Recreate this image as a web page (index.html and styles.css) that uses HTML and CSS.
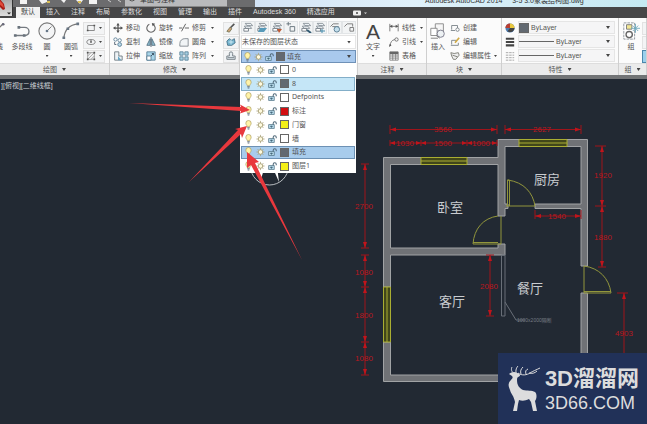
FILE: index.html
```html
<!DOCTYPE html>
<html lang="zh-CN">
<head>
<meta charset="utf-8">
<title>Autodesk AutoCAD 2014</title>
<link rel="stylesheet" href="styles.css">
</head>
<body>
<svg class="defs" aria-hidden="true">
  <symbol id="bulb" viewBox="0 0 10 12"><path d="M3.5 8C3.5 6.500 1.800 6 1.800 3.800a3.200 3.200 0 0 1 6.400 0C8.200 6 6.500 6.500 6.500 8z" fill="#fff3a8" stroke="#a99a5c" stroke-width=".8"/><path d="M3.500 9.300h3M4 10.800h2" stroke="#667381" stroke-width="1.200"/></symbol>
  <symbol id="sun" viewBox="0 0 12 12"><path d="M6 .5v11M.5 6h11M2.100 2.100l7.800 7.800M9.900 2.100l-7.800 7.800" stroke="#aaa27a" stroke-width="1"/><circle cx="6" cy="6" r="3" fill="#fffbe0" stroke="#9c9367"/></symbol>
  <symbol id="lock" viewBox="0 0 13 12"><path d="M7.500 6V3.500a2.200 2.200 0 0 1 4.400 0V5" fill="none" stroke="#4f6878" stroke-width="1.500"/><rect x="1" y="5.500" width="8" height="5.500" fill="#b4d6e6" stroke="#4f7184"/><path d="M3 8h4M5 7v3" stroke="#36586c"/></symbol>
  <symbol id="layer" viewBox="0 0 12 12"><path d="M3 1.500h6L11 4H5zM2 4.500h6l2 2.500H4z" fill="#eef3f6" stroke="#717b83" stroke-width=".8"/><path d="M1.500 7v3h5V7z" fill="#fff" stroke="#66717a" stroke-width=".9"/></symbol>
</svg>

<header class="titlebar">
  <div class="quick">
    <svg viewBox="0 0 110 7" class="quick-icons"><path d="M6 0h7v4H6zM25 0l3 4 5-2V0M47 0l3 3 2-3M62 0l4 4 3-4M75 0h8v4h-8z" fill="#f3f3f3"/><path d="M33 2h3M64 2h3" stroke="#d8bd55" stroke-width="2"/><path d="M94 0l3 2M104 0l3 2" stroke="#ccc"/></svg>
  </div>
  <div class="workspace-name"><svg viewBox="0 0 8 8"><circle cx="4" cy="3" r="3" fill="#ccc" stroke="#555"/><circle cx="4" cy="3" r="1" fill="#555"/></svg>草图与注释</div>
  <div class="quick-end"></div>
  <div class="caption">Autodesk AutoCAD 2014 &nbsp; &nbsp; 3-5 3.0家装结构图.dwg</div>
</header>

<nav class="tabs">
  <a class="tab active" href="#">默认</a><a class="tab" href="#">插入</a><a class="tab" href="#">注释</a><a class="tab" href="#">布局</a><a class="tab" href="#">参数化</a><a class="tab" href="#">视图</a><a class="tab" href="#">管理</a><a class="tab" href="#">输出</a><a class="tab" href="#">插件</a><a class="tab" href="#">Autodesk 360</a><a class="tab" href="#">精选应用</a>
  <button class="tab-toggle" aria-label="最小化功能区"><svg viewBox="0 0 14 6"><rect width="8" height="5" y=".5" rx="1" fill="#eee"/><circle cx="4" cy="3" r="1" fill="#444"/><path d="M11 2.500h3L12.500 4z" fill="#ddd"/></svg></button>
  <button class="app-button" aria-label="应用程序菜单"><svg viewBox="0 0 12 16"><path d="M-1-2L4 4 5 9 3 10-1 6z" fill="#a91b14"/><path d="M-1 0l4 4 1 4-5-4z" fill="#e04a3a"/><path d="M7 12.500h4L9 14.500z" fill="#222"/></svg></button>
</nav>

<main class="ribbon">
  <section class="panel">
    <div class="tools draw">
      <button class="big"><svg viewBox="0 0 20 20"><path d="M2 17L18 2" stroke="#777" stroke-width="1.400"/><circle cx="18" cy="2.500" r="1.500" fill="#667"/></svg>直线</button>
      <button class="big"><svg viewBox="0 0 20 20"><path d="M2 15h10c8 0 7-9 1-9H6" fill="none" stroke="#747a80" stroke-width="1.500"/><path d="M1 13.500h3v3H1zM5 4.500h3v3H5zM11 13.500h3v3h-3z" fill="#69737c"/></svg>多段线</button>
      <button class="big"><svg viewBox="0 0 20 20"><circle cx="10" cy="10" r="9" fill="#f4f5f6" stroke="#777" stroke-width="1.200"/><path d="M10 10l5-5" stroke="#777"/><circle cx="10" cy="10" r="1.500" fill="#678"/></svg>圆<i class="arrow"></i></button>
      <button class="big"><svg viewBox="0 0 20 20"><path d="M2 18C3 8 8 3 18 2" fill="none" stroke="#777" stroke-width="1.300"/><path d="M.5 16h3v3h-3zM5 6h3v3H5zM16 .5h3v3h-3z" fill="#687684"/></svg>圆弧<i class="arrow"></i></button>
      <div class="stack boxed">
        <button aria-label="矩形"><svg viewBox="0 0 12 12"><path d="M2 3h8v6H2z" fill="none" stroke="#777"/><path d="M1 8h2v2H1zM9 2h2v2H9z" fill="#555"/></svg><i class="arrow"></i></button>
        <button aria-label="椭圆"><svg viewBox="0 0 12 12"><ellipse cx="6" cy="6" rx="5" ry="3" fill="none" stroke="#777"/><path d="M6 4v2M5 6h2" stroke="#555" stroke-width="1.500"/></svg><i class="arrow"></i></button>
        <button aria-label="图案填充"><svg viewBox="0 0 12 12"><path d="M2 2h8v8H2zM2 6l4-4M2 10l8-8M6 10l4-4" fill="none" stroke="#999"/><path d="M1 1h2v2H1zM9 9h2v2H9zM1 9h2v2H1zM9 1h2v2H9z" fill="#555"/></svg><i class="arrow"></i></button>
      </div>
    </div>
    <footer>绘图<i class="arrow"></i></footer>
  </section>

  <section class="panel">
    <div class="tools modify">
      <div class="stack">
        <button><svg viewBox="0 0 12 12"><path d="M6 1v10M1 6h10" stroke="#555" stroke-width="1.500"/><path d="M6 0l2 3H4zM6 12l2-3H4zM0 6l3-2v4zM12 6L9 4v4z" fill="#555"/></svg>移动</button>
        <button><svg viewBox="0 0 12 12"><circle cx="3" cy="3" r="2" fill="#fff" stroke="#557990"/><circle cx="8" cy="4" r="2" fill="#fff" stroke="#557990"/><circle cx="8" cy="9" r="2.300" fill="#b9d9e9" stroke="#557990"/><path d="M2 6v3h2" fill="none" stroke="#456"/></svg>复制</button>
        <button><svg viewBox="0 0 12 12"><path d="M2 11V1h5v5h4v5z" fill="#eef3f6" stroke="#65717a"/><path d="M6 6v5h4z" fill="#66a6c5"/></svg>拉伸</button>
      </div>
      <div class="stack">
        <button><svg viewBox="0 0 12 12"><path d="M4 1.500a5 5 0 1 0 4 0" fill="none" stroke="#666" stroke-width="1.300"/><path d="M7 0l4 1-3 3z" fill="#555"/></svg>旋转</button>
        <button><svg viewBox="0 0 12 12"><path d="M5 2v8H1zM7 2v8h4z" fill="#8fbdd2" stroke="#506d7d"/><path d="M6 0v12" stroke="#456"/></svg>镜像</button>
        <button><svg viewBox="0 0 12 12"><path d="M1 1h10v10H1z" fill="#a8d5e9" stroke="#527a90"/><path d="M1 6h5v5H1z" fill="#fff" stroke="#527a90"/><path d="M6 6l3-3M7 3h2v2" fill="none" stroke="#345"/></svg>缩放</button>
      </div>
      <div class="stack wide">
        <button><svg viewBox="0 0 12 12"><path d="M0 6h4M7 6h5M3 10l5-9" stroke="#666" stroke-width="1.200"/></svg>修剪<i class="arrow"></i></button>
        <button><svg viewBox="0 0 12 12"><path d="M1 11V8c0-4 3-6 6-6h4v9z" fill="#f1f4f6" stroke="#788188"/></svg>圆角<i class="arrow"></i></button>
        <button><svg viewBox="0 0 12 12"><path d="M1 1h4v4H1zM7 1h4v4H7zM1 7h4v4H1zM7 7h4v4H7z" fill="#a7d0e4" stroke="#557f96"/></svg>阵列<i class="arrow"></i></button>
      </div>
      <div class="stack boxed">
        <button aria-label="删除"><svg viewBox="0 0 12 12"><path d="M10 1L5 6" stroke="#555" stroke-width="2"/><path d="M5 5l2 2-3 4-3-1z" fill="#cda177" stroke="#775"/></svg></button>
        <button aria-label="分解"><svg viewBox="0 0 12 12"><path d="M1 5l3-3 3 2 3-2 1 5-4 3H2z" fill="#71b3ce" stroke="#416c83"/><path d="M3 6h6M6 3v6" stroke="#d9eff7"/></svg></button>
        <button aria-label="偏移"><svg viewBox="0 0 12 12"><path d="M4 6V3a2 2 0 0 1 4 0v3h3v4H1V6zM2 8h8" fill="#e6edf1" stroke="#67727a"/></svg></button>
      </div>
    </div>
    <footer>修改<i class="arrow"></i></footer>
  </section>

  <section class="panel layers">
    <div class="layer-tools">
      <button aria-label="图层特性"><svg><use href="#layer"/></svg></button>
      <button aria-label="置为当前"><svg><use href="#layer"/><path d="M4 6h7L8 10H2z" fill="#579ab9"/></svg></button>
      <button aria-label="匹配图层"><svg><use href="#layer"/><path d="M6 7h5l-3 4z" fill="#bd5a35"/></svg></button>
      <button aria-label="上一个"><svg viewBox="0 0 12 12"><path d="M1 2h5M3 0v4M5 5h5v5H5z" fill="none" stroke="#66737b"/></svg></button>
      <button aria-label="隔离"><svg><use href="#layer"/><path d="M7 8l4 3" stroke="#335b73" stroke-width="2"/></svg></button>
      <button aria-label="冻结"><svg><use href="#layer"/><path d="M8 7v4M6 9h5" stroke="#468bab"/></svg></button>
      <button aria-label="关闭"><svg viewBox="0 0 12 12"><path d="M1 5l3-3h6M3 5h7" fill="none" stroke="#777"/><circle cx="8" cy="8" r="3" fill="#c5e0ed" stroke="#567b90"/></svg></button>
      <button aria-label="锁定"><svg viewBox="0 0 12 12"><path d="M1 5l3-3h6v3M7 6v4h4V6z" fill="none" stroke="#777"/></svg></button>
    </div>
    <label class="field state"><select aria-label="图层状态"><option>未保存的图层状态</option></select><i class="arrow"></i></label>
    <div class="combo">
      <button class="layer-row current" aria-haspopup="listbox" aria-expanded="true"><svg><use href="#bulb"/></svg><svg><use href="#sun"/></svg><svg><use href="#lock"/></svg><b class="swatch gray"></b>填充<i class="arrow"></i></button>
      <ul class="layer-list" role="listbox" aria-label="图层">
        <li class="layer-row" role="option"><svg><use href="#bulb"/></svg><svg><use href="#sun"/></svg><svg><use href="#lock"/></svg><b class="swatch"></b>0</li>
        <li class="layer-row hover" role="option"><svg><use href="#bulb"/></svg><svg><use href="#sun"/></svg><svg><use href="#lock"/></svg><b class="swatch gray"></b>8</li>
        <li class="layer-row" role="option"><svg><use href="#bulb"/></svg><svg><use href="#sun"/></svg><svg><use href="#lock"/></svg><b class="swatch"></b>Defpoints</li>
        <li class="layer-row" role="option"><svg><use href="#bulb"/></svg><svg><use href="#sun"/></svg><svg><use href="#lock"/></svg><b class="swatch red"></b>标注</li>
        <li class="layer-row" role="option"><svg><use href="#bulb"/></svg><svg><use href="#sun"/></svg><svg><use href="#lock"/></svg><b class="swatch yellow"></b>门窗</li>
        <li class="layer-row" role="option"><svg><use href="#bulb"/></svg><svg><use href="#sun"/></svg><svg><use href="#lock"/></svg><b class="swatch"></b>墙</li>
        <li class="layer-row selected" role="option" aria-selected="true"><svg><use href="#bulb"/></svg><svg><use href="#sun"/></svg><svg><use href="#lock"/></svg><b class="swatch gray"></b>填充</li>
        <li class="layer-row" role="option"><svg><use href="#bulb"/></svg><svg><use href="#sun"/></svg><svg><use href="#lock"/></svg><b class="swatch yellow"></b>图层1</li>
      </ul>
    </div>
  </section>

  <section class="panel">
    <div class="tools annotate">
      <button class="big"><span class="letter">A</span>文字<i class="arrow"></i></button>
      <div class="stack wide">
        <button><svg viewBox="0 0 12 12"><path d="M1 1v9M11 1v9M1 4h10" stroke="#666" fill="none"/><path d="M1 4l3-2v4zM11 4L8 2v4z" fill="#555"/></svg>线性<i class="arrow"></i></button>
        <button><svg viewBox="0 0 12 12"><path d="M1 11c1-5 2-7 6-8" fill="none" stroke="#666"/><circle cx="9" cy="3" r="2" fill="none" stroke="#666"/><path d="M0 12l1-4 2 2z" fill="#555"/></svg>引线<i class="arrow"></i></button>
        <button><svg viewBox="0 0 12 12"><path d="M1 1h10v10H1zM1 6h10M1 8.500h10M4.500 3v8M8 3v8" fill="#fff" stroke="#777"/><path d="M1 1h10v3H1z" fill="#666"/></svg>表格</button>
      </div>
    </div>
    <footer>注释<i class="arrow"></i></footer>
  </section>

  <section class="panel">
    <div class="tools block">
      <button class="big"><svg viewBox="0 0 20 20"><path d="M7 2h9v8H7z" fill="#f6f6f6" stroke="#888"/><path d="M2 7h7v8H2z" fill="#fff" stroke="#888"/><circle cx="13" cy="13" r="4" fill="#eef2f4" stroke="#778"/><path d="M2 18h8M8 15l4 3" stroke="#777"/></svg>插入</button>
      <div class="stack wide">
        <button><svg viewBox="0 0 12 12"><path d="M2 8V3h7v3M1 9h5" fill="none" stroke="#707a80"/><circle cx="9" cy="8" r="2" fill="#fff" stroke="#707a80"/></svg>创建</button>
        <button><svg viewBox="0 0 12 12"><path d="M2 9V4h6M1 10h9V7" fill="none" stroke="#707a80"/><path d="M6 7l5-6" stroke="#d0aa43" stroke-width="2"/></svg>编辑</button>
        <button><svg viewBox="0 0 12 12"><path d="M1 2l4 1 5-1 1 3-4 5H4L2 6zM3 5l6 2" fill="#eee" stroke="#72746a"/></svg>编辑属性<i class="arrow"></i></button>
      </div>
    </div>
    <footer>块<i class="arrow"></i></footer>
  </section>

  <section class="panel">
    <div class="properties">
      <svg viewBox="0 0 12 12"><circle cx="6" cy="6" r="5.500" fill="#4d7bb0"/><path d="M6 6V.5A5.500 5.500 0 0 1 11.500 6z" fill="#eac83d"/><path d="M6 6H.5A5.500 5.500 0 0 1 6 .5z" fill="#ba3e31"/><path d="M6 6h5.500A5.500 5.500 0 0 1 3 10z" fill="#444"/></svg>
      <label class="field"><b class="swatch gray large"></b><select aria-label="颜色"><option>ByLayer</option></select><i class="arrow"></i></label>
      <svg viewBox="0 0 12 12"><path d="M1 2h10M1 6h10M1 10h10" stroke="#444" stroke-width="2.500"/></svg>
      <label class="field"><span class="sample"></span><select aria-label="线宽"><option>ByLayer</option></select><i class="arrow"></i></label>
      <svg viewBox="0 0 12 12"><path d="M1 2h10M1 5h10M1 8h10M1 11h10" stroke="#999" stroke-dasharray="3 1"/></svg>
      <label class="field"><span class="sample"></span><select aria-label="线型"><option>ByLayer</option></select><i class="arrow"></i></label>
    </div>
    <footer>特性<i class="arrow"></i></footer>
  </section>

  <section class="panel">
    <div class="tools group">
      <button class="big"><svg viewBox="0 0 20 20"><path d="M2 1h12v18H2z" fill="#fff" stroke="#8a9298" stroke-dasharray="3 1"/><path d="M5 3h6v5H5z" fill="#f2e794" stroke="#777"/><circle cx="8" cy="14" r="3.500" fill="#fff" stroke="#666" stroke-width="1.500"/><path d="M15 2v10M10 7h10M12 4l6 6M18 4l-6 6" stroke="#70aabe"/></svg>组</button>
      <div class="stack boxed">
        <button aria-label="解除编组"><svg viewBox="0 0 12 12"><path d="M2 2h8v8H2z" fill="#cbc992" stroke="#555"/></svg></button>
        <button aria-label="组编辑"><svg viewBox="0 0 12 12"><path d="M2 3h7v7H2z" fill="#d9e4ed" stroke="#687c91"/></svg></button>
        <button class="on" aria-label="启用组选择"><svg viewBox="0 0 12 12"><path d="M2 2h8v8H2z" fill="#e8f6ff" stroke="#426c88"/></svg></button>
      </div>
    </div>
    <footer>组<i class="arrow"></i></footer>
  </section>
</main>

<section class="canvas">
  <div class="view-label">][俯视][二维线框]</div>
  <svg class="plan" viewBox="0 79 647 345" role="img" aria-label="户型平面图">
    <g class="compass"><circle cx="269.500" cy="166" r="19"/><path d="M257 166l4 13 4-13zM272 166l7 16-2-16z"/></g>
    <g class="wall">
      <path d="M383.500 157.500H498V139.500H587.500V266H581V208.500H535V204H581V146.500H505V204H508V208.500H505V216H498V164.500H390.500V248H498V244H505V255H390.500V287H383.500z"/>
      <path d="M383.500 342H390.500V375H581V293H587.500V381.500H383.500z"/>
      <path class="screen" d="M501.500 255h3.500v61h-3.500zM505 302l11 18h9"/>
    </g>
    <g class="window">
      <path d="M421 157.500h46v7h-46zM421 161h46M519 139.500h48v7h-48zM519 143h48M383.500 287h7v55h-7zM387 287v55"/>
    </g>
    <g class="door">
      <path d="M506 206h29C533 193 524 182 507.500 180M507.500 180h2v26M507.500 180v26"/>
      <path d="M498 216C483 218 474 229 473 244H501V216M473 242.500h25"/>
      <path d="M584 266C599 268 609 278 611 293H584V266M584 291.500h27"/>
    </g>
    <g class="dim">
      <path d="M390 129.500H497M390 125v9M497 125v9M390 143H497M390 140v6M421 140v6M467 140v6M497 140v6M505 129.500H581M505 125v9M581 125v9M535 216H581M535 210v9M581 210v9"/>
      <path d="M365 164V248M361 164h8M361 248h8M365 255V375M361 255h8M361 287h8M361 342h8M361 375h8M490 255V316M486 255h8M486 316h8M602 146V267M595 146h11M595 206h11M598 267h8M624 293V353M617 293h11"/>
      <path class="heads" d="M390 129.500l6-2v4zM497 129.500l-6-2v4zM390 143l5-2v4zM421 143l-5-2v4zM421 143l5-2v4zM467 143l-5-2v4zM467 143l5-2v4zM497 143l-5-2v4zM505 129.500l6-2v4zM581 129.500l-6-2v4zM535 216l6-2v4zM581 216l-6-2v4zM365 164l-2 6h4zM365 248l-2-6h4zM365 255l-2 6h4zM365 287l-2-6h4zM365 287l-2 6h4zM365 342l-2-6h4zM365 342l-2 6h4zM365 375l-2-6h4zM490 255l-2 6h4zM490 316l-2-6h4zM602 146l-2 6h4zM602 206l-2-6h4zM602 206l-2 6h4zM602 267l-2-6h4zM624 293l-2 6h4z"/>
      <text x="443" y="132">3560</text><text x="405" y="146">1030</text><text x="443" y="146">1500</text><text x="481" y="146">1000</text><text x="542" y="132">2627</text><text x="557" y="219">1540</text>
      <text x="364" y="209">2700</text><text x="364" y="275">1080</text><text x="364" y="318">1800</text><text x="364" y="361">1080</text><text x="489" y="289">2080</text><text x="603" y="178">1920</text><text x="603" y="240">1880</text><text x="624" y="336">4903</text>
    </g>
    <g class="room"><text x="450" y="212">卧室</text><text x="547" y="184">厨房</text><text x="452" y="306">客厅</text><text x="530" y="293">餐厅</text></g>
    <text class="note" x="517" y="322">1000x2000隔断</text>
  </svg>
  <svg class="pointers" viewBox="0 79 647 345" aria-hidden="true"><path d="M129 103L241 107 240 104.500 250 110 240 113.500 241 111zM189 182L238 130 235 129 247 126 242 138 241 134zM302 260L251 165 247 168 247 152 259 162 255 163z"/></svg>
  <aside class="brand">
    <svg viewBox="0 0 34 46"><path d="M2 8C4 6 8 5 10 7c2 0 3 1 3 3-2 1-3 1-3 4 0 5 2 8 6 10 4 1 9 0 12 2 2 2 2 6 0 9l2 10h-4l-2-9-2-3c-4 2-7 2-10 1l-1 4-1 7H6l2-9c-1-6-4-8-5-12-1-3-3-6 1-10 2-2 2-3 1-4z"/><path d="M8 8C4 6 4 3 5 1M10 8C8 6 9 2 11 0M11 7c4 3 9 2 12 0s6-3 10-5M14 8c-1-3 0-5 2-7M19 8c-1-3 0-4 2-5M22 7c3 1 6 0 8-2" class="antler"/></svg>
    <div class="brand-text"><strong>3D溜溜网</strong><span>3D66.COM</span></div>
  </aside>
</section>
</body>
</html>
```

FILE: styles.css
```css
* { box-sizing: border-box; }
body {
  margin: 0;
  min-height: 100vh;
  display: flex;
  flex-direction: column;
  overflow-x: hidden;
  background: #222933;
  color: #555;
  font: 7px/10px "Liberation Sans", "Noto Sans CJK SC", sans-serif;
}
button, select { font: inherit; color: inherit; background: none; border: 0; padding: 0; margin: 0; }
.defs { position: absolute; width: 0; height: 0; }
.arrow {
  flex: none;
  width: 4px;
  height: 3px;
  background: #444;
  clip-path: polygon(0 0, 100% 0, 50% 100%);
}

.titlebar { display: flex; height: 7px; overflow: hidden; align-items: flex-end; background: #6c6c6e; }
.quick { flex: 0 0 125px; padding-left: 14px; height: 7px; }
.quick-icons { display: block; width: 110px; height: 7px; }
.workspace-name { flex: 0 0 102px; display: flex; gap: 4px; padding: 0 3px 1px; background: #b9babc; color: #333; border-bottom: 1px solid #888; }
.workspace-name svg { width: 8px; height: 8px; }
.quick-end { flex: 0 0 28px; }
.caption { flex: 1; padding: 0 0 1px 170px; white-space: nowrap; color: #333; background: linear-gradient(90deg, #d3e3f5, #dff0fa 40%, #c5e9f2); }

.tabs { position: relative; display: flex; height: 11px; padding-left: 16px; background: #464647; }
.tab { padding: 0 5px; color: #ddd; text-decoration: none; white-space: nowrap; margin-right: 1px; }
.tab.active { background: #f1f1f1; color: #444; margin-right: 1px; }
.tab-toggle { margin-left: 12px; display: flex; align-items: center; }
.tab-toggle svg { width: 14px; height: 6px; }
.app-button { position: absolute; left: 0; bottom: 2px; width: 13px; height: 16px; background: linear-gradient(#aaa, #ddd); border-right: 1px solid #333; }
.app-button svg { display: block; width: 12px; height: 16px; }

.ribbon {
  display: grid;
  grid-template-columns: 110px 130px 118px 69px 75px 117px 1fr;
  height: 61px;
  background: #fbfbfb;
  border-bottom: 4px solid #727476;
}
.panel { display: flex; flex-direction: column; min-width: 0; border-right: 1px solid #cfcfcf; }
.panel footer {
  display: flex; align-items: center; justify-content: center; gap: 5px;
  height: 12px; margin-top: auto; background: #ebebeb; border-top: 1px solid #ddd;
}
.tools { display: flex; height: 45px; padding-top: 3px; overflow: hidden; }
.big { flex: none; display: flex; flex-direction: column; align-items: center; width: 26px; white-space: nowrap; }
.big svg { width: 18px; height: 18px; margin: 1px 0 2px; }
.big .arrow { width: 3px; height: 2px; margin-top: 3px; }
.stack { display: grid; grid-template-rows: repeat(3, 14px); align-items: center; }
.stack button { display: flex; align-items: center; gap: 3px; white-space: nowrap; }
.stack svg { flex: none; width: 10px; height: 10px; }
.stack .arrow { width: 3px; height: 2px; margin-left: auto; }
.boxed button { height: 13px; padding: 0 2px; background: #f3f4f5; border: 1px solid #e2e2e2; }
.boxed .on { background: #9bd0ec; border-color: #4a87ac; }
.draw { justify-content: flex-end; padding-right: 4px; }
.draw .big:nth-child(3), .draw .big:nth-child(4) { width: 24px; }
.modify { padding-left: 3px; gap: 6px; }
.modify .boxed { margin-left: 3px; }
.modify .wide { width: 36px; }
.layers { padding: 2px 1px 0; }
.layer-tools { display: flex; justify-content: space-between; height: 15px; align-items: center; }
.layer-tools button { width: 14px; height: 13px; background: #f2f4f5; border: 1px solid #e2e5e7; }
.layer-tools svg { display: block; width: 12px; height: 11px; }
.field { display: flex; align-items: center; gap: 2px; height: 13px; padding-right: 4px; background: #f5f5f6; border: 1px solid #e5e5e5; }
.field select { flex: 1; min-width: 0; appearance: none; outline: 0; }
.state { height: 14px; background: #fff; }
.combo { position: relative; margin-top: 1px; }
.layer-row {
  display: flex; align-items: center; gap: 2px; padding: 0 1px; border: 1px solid transparent;
  white-space: nowrap; font-family: "Noto Sans", "Noto Sans CJK SC", sans-serif;
}
.layer-row svg { width: 9px; height: 10px; }
.current { width: 100%; height: 13px; padding-right: 4px; background: #a9c9ed; border-color: #6f91b7; }
.current .arrow { margin-left: auto; }
.swatch { flex: none; width: 9px; height: 9px; border: 1px solid #666; background: #fff; }
.gray { background: #626971; }
.red { background: #d30f12; }
.yellow { background: #f4f018; }
.large { width: 10px; height: 10px; }
.layer-list {
  position: absolute; z-index: 2; top: 100%; left: -1px; right: 0;
  display: grid; grid-template-rows: repeat(8, 1fr);
  height: 110px; margin: 0; padding: 0 1px; list-style: none; background: #fff;
}
.layer-list .layer-row { padding-left: 2px; gap: 3px; }
.layer-list .hover { background: #c5e6f7; border-color: #83aec8; }
.layer-list .selected { background: #a8ccec; border-color: #6d91b4; }
.annotate { padding-left: 2px; gap: 3px; }
.letter { height: 21px; font-size: 21px; line-height: 21px; color: #444; }
.annotate .wide { width: 34px; }
.block { gap: 1px; }
.block .big { width: 22px; }
.block .wide { width: 43px; }
.properties { display: grid; grid-template-columns: 10px 1fr; gap: 1px 3px; padding: 3px 3px 0; align-items: center; }
.properties svg { width: 10px; height: 10px; }
.sample { width: 35px; height: 1px; background: #666; }
.group { padding-left: 1px; }
.group .big { width: 22px; }

.canvas { position: relative; flex: 1; }
.view-label { position: absolute; top: 2px; left: 1px; color: #ccd0d5; }
.plan, .pointers { display: block; width: 100%; }
.pointers { position: absolute; inset: 0; z-index: 3; overflow: visible; pointer-events: none; fill: #e8383d; }
.compass circle { fill: none; stroke: #b8bcc0; }
.compass path { fill: #fff; }
.wall path { fill: #707276; stroke: #a1a3a5; }
.wall .screen { fill: none; stroke: #696f78; }
.window path { fill: #42471a; stroke: #aaae32; }
.door path { fill: none; stroke: #92963c; }
.dim path { fill: none; stroke: #a0141b; }
.dim .heads { fill: #c1141b; stroke: none; }
.dim text { fill: #b9181f; font-size: 8px; text-anchor: middle; }
.room text { fill: #c9ccd0; font-size: 13px; text-anchor: middle; }
.note { fill: #777d85; font-size: 5px; }
.brand {
  position: absolute; z-index: 4; right: 0; bottom: 0;
  display: flex; align-items: center; gap: 4px;
  padding: 12px 8px 11px 9px; background: #213158; color: #dcdcdd;
}
.brand svg { width: 34px; height: 46px; fill: #dcdcdd; }
.brand .antler { fill: none; stroke: #dcdcdd; stroke-width: 1; }
.brand-text { display: flex; flex-direction: column; white-space: nowrap; }
.brand strong { font-size: 22px; line-height: 28px; }
.brand span { font-size: 18px; line-height: 20px; }
```
